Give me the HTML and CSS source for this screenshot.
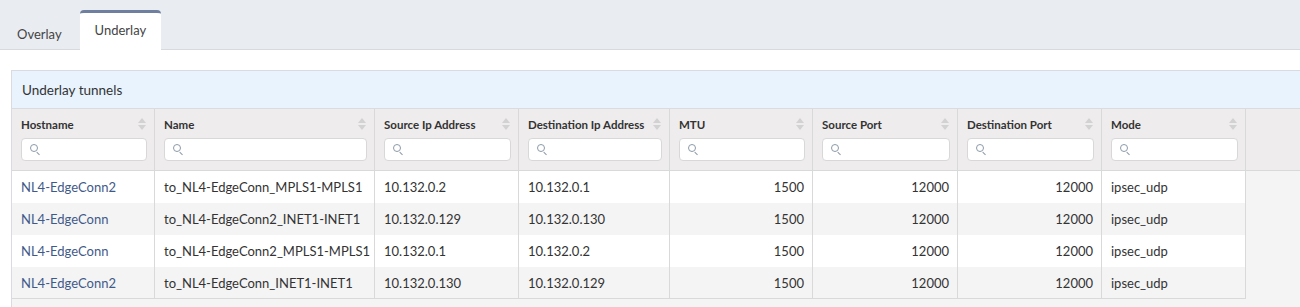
FILE: index.html
```html
<!DOCTYPE html>
<html lang="en">
<head>
  <meta charset="UTF-8">
  <title>Underlay tunnels</title>
  <link rel="stylesheet" href="styles.css">
</head>
<body>
  <div class="tabs">
    <a class="tab">Overlay</a>
    <a class="tab active">Underlay</a>
  </div>

  <div class="tab-content">
    <div class="panel">
      <div class="panel-heading">Underlay tunnels</div>

      <div class="grid">
        <div class="row head">
          <div class="cell"><div class="th-title">Hostname<span class="sort"></span></div><div class="search"><input type="text"></div></div>
          <div class="cell"><div class="th-title">Name<span class="sort"></span></div><div class="search"><input type="text"></div></div>
          <div class="cell"><div class="th-title">Source Ip Address<span class="sort"></span></div><div class="search"><input type="text"></div></div>
          <div class="cell"><div class="th-title">Destination Ip Address<span class="sort"></span></div><div class="search"><input type="text"></div></div>
          <div class="cell"><div class="th-title">MTU<span class="sort"></span></div><div class="search"><input type="text"></div></div>
          <div class="cell"><div class="th-title">Source Port<span class="sort"></span></div><div class="search"><input type="text"></div></div>
          <div class="cell"><div class="th-title">Destination Port<span class="sort"></span></div><div class="search"><input type="text"></div></div>
          <div class="cell"><div class="th-title">Mode<span class="sort"></span></div><div class="search"><input type="text"></div></div>
          <div class="filler"></div>
        </div>

        <div class="row">
          <div class="cell"><a href="#">NL4-EdgeConn2</a></div>
          <div class="cell">to_NL4-EdgeConn_MPLS1-MPLS1</div>
          <div class="cell">10.132.0.2</div>
          <div class="cell">10.132.0.1</div>
          <div class="cell num">1500</div>
          <div class="cell num">12000</div>
          <div class="cell num">12000</div>
          <div class="cell">ipsec_udp</div>
          <div class="filler"></div>
        </div>
        <div class="row">
          <div class="cell"><a href="#">NL4-EdgeConn</a></div>
          <div class="cell">to_NL4-EdgeConn2_INET1-INET1</div>
          <div class="cell">10.132.0.129</div>
          <div class="cell">10.132.0.130</div>
          <div class="cell num">1500</div>
          <div class="cell num">12000</div>
          <div class="cell num">12000</div>
          <div class="cell">ipsec_udp</div>
          <div class="filler"></div>
        </div>
        <div class="row">
          <div class="cell"><a href="#">NL4-EdgeConn</a></div>
          <div class="cell">to_NL4-EdgeConn2_MPLS1-MPLS1</div>
          <div class="cell">10.132.0.1</div>
          <div class="cell">10.132.0.2</div>
          <div class="cell num">1500</div>
          <div class="cell num">12000</div>
          <div class="cell num">12000</div>
          <div class="cell">ipsec_udp</div>
          <div class="filler"></div>
        </div>
        <div class="row last">
          <div class="cell"><a href="#">NL4-EdgeConn2</a></div>
          <div class="cell">to_NL4-EdgeConn_INET1-INET1</div>
          <div class="cell">10.132.0.130</div>
          <div class="cell">10.132.0.129</div>
          <div class="cell num">1500</div>
          <div class="cell num">12000</div>
          <div class="cell num">12000</div>
          <div class="cell">ipsec_udp</div>
          <div class="filler"></div>
        </div>
      </div>
    </div>
  </div>
</body>
</html>
```

FILE: styles.css
```css
body {
  margin: 0;
  font-family: 'Lato', 'Liberation Sans', sans-serif;
  font-size: 13px;
  color: #333;
  background-color: #fff;
  overflow: hidden;
}

/* タブ */
.tabs {
  display: flex;
  align-items: flex-end;
  gap: 3px;
  height: 49px;
  background-color: #e9ecf1;
  border-bottom: 1px solid #d6d9de;
  padding-left: 2px;
}

.tab {
  display: block;
  padding: 0 15px;
  height: 39px;
  line-height: 41px;
  color: #444;
  font-size: 13px;
  margin-bottom: -1px;
  box-sizing: border-box;
  border-top: 3px solid transparent;
  border-radius: 4px 4px 0 0;
}

.tab.active {
  background-color: #fff;
  border-top-color: #6e7f9f;
  height: 40px;
  line-height: 35px;
}

.tab-content {
  padding: 20px 0 0 11px;
  height: 238px;
}

.panel {
  margin-right: -12px;
  border: 1px solid #d9dbdf;
  border-bottom: none;
  background-color: #f4f4f4;
  height: 100%;
  box-sizing: border-box;
}

.panel-heading {
  background-color: #e8f3fe;
  height: 37px;
  line-height: 38px;
  padding-left: 10px;
  border-bottom: 1px solid #d9dbdf;
  font-size: 13.5px;
}

/* 一覧 */
.row {
  display: grid;
  grid-template-columns: 143px 220px 144px 151px 143px 145px 144px 144px 1fr;
  background-color: #fff;
}

.row:nth-child(odd) {
  background-color: #f4f4f4;
}

.row.head {
  background-color: #eeeced;
  border-bottom: 1px solid #d9d9d9;
}

.cell {
  box-sizing: border-box;
  border-right: 1px solid #d9d9d9;
  height: 32px;
  line-height: 32px;
  padding: 0 8px 0 9px;
  white-space: nowrap;
  overflow: hidden;
}

.row.last .cell {
  height: 32px;
  border-bottom: 1px solid #d9d9d9;
}

.row.last .filler {
  background-color: #f4f4f4;
}

.filler {
  background-color: #f4f4f4;
}

.row.head .filler {
  background-color: #eeeced;
}

.cell.num {
  text-align: right;
}

.row.head .cell {
  height: 61px;
  line-height: normal;
  padding: 7px 7px 0 9px;
  font-size: 11.5px;
  font-weight: bold;
}

.th-title {
  display: flex;
  justify-content: space-between;
  align-items: center;
  height: 16px;
}

.sort {
  width: 8px;
  height: 12px;
  margin-right: 1px;
  position: relative;
}

.sort::before,
.sort::after {
  content: "";
  position: absolute;
  left: 0;
  border-left: 4px solid transparent;
  border-right: 4px solid transparent;
}

.sort::before {
  top: 0;
  border-bottom: 5px solid #d2d2d2;
}

.sort::after {
  bottom: 0;
  border-top: 5px solid #d2d2d2;
}

.search {
  margin-top: 6px;
  position: relative;
}

.search input {
  display: block;
  width: 100%;
  height: 23px;
  box-sizing: border-box;
  border: 1px solid #d8d8d8;
  border-radius: 4px;
  background-color: #fff;
  padding-left: 24px;
  font-family: inherit;
}

.search::before {
  content: "";
  position: absolute;
  left: 9px;
  top: 6px;
  width: 6px;
  height: 6px;
  border: 1.3px solid #8c9aa8;
  border-radius: 50%;
}

.search::after {
  content: "";
  position: absolute;
  left: 15px;
  top: 15px;
  width: 4px;
  height: 1.3px;
  background-color: #8c9aa8;
  transform: rotate(45deg);
}

.cell a {
  color: #3f5a8a;
  text-decoration: none;
}
```
